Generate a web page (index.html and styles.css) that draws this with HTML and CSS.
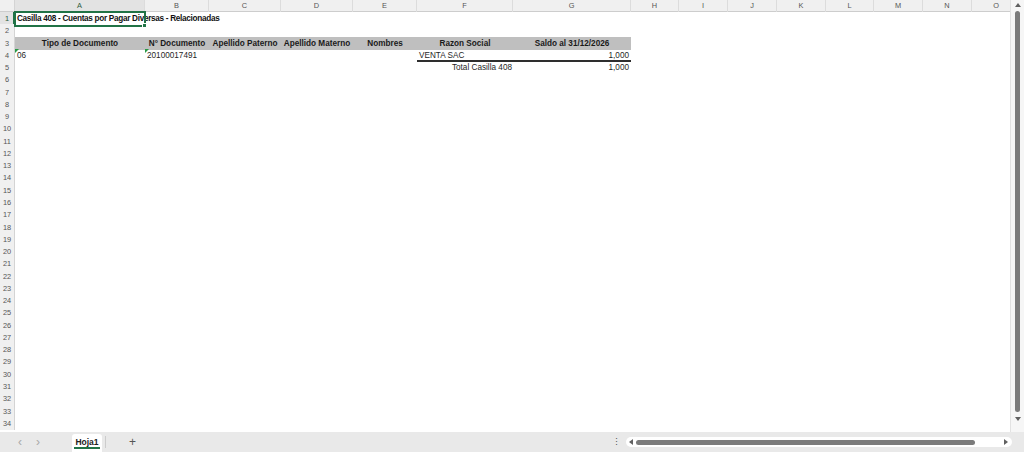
FILE: index.html
```html
<!DOCTYPE html>
<html lang="es">
<head>
<meta charset="utf-8">
<title>Hoja1</title>
<link rel="stylesheet" href="styles.css">
</head>
<body>
<div class="app">
  <div class="main">
    <div class="sheet">
      <div class="row colhdr">
        <div class="corner"></div>
        <div class="ch sel">A</div><div class="ch">B</div><div class="ch">C</div><div class="ch">D</div>
        <div class="ch">E</div><div class="ch">F</div><div class="ch">G</div><div class="ch">H</div>
        <div class="ch">I</div><div class="ch">J</div><div class="ch">K</div><div class="ch">L</div>
        <div class="ch">M</div><div class="ch">N</div><div class="ch">O</div>
      </div>
      <div class="row"><div class="rh sel">1</div><div class="c active"><span class="title">Casilla 408 - Cuentas por Pagar Diversas - Relacionadas</span></div></div>
      <div class="row"><div class="rh">2</div></div>
      <div class="row">
        <div class="rh">3</div>
        <div class="c hd">Tipo de Documento</div>
        <div class="c hd">N° Documento</div>
        <div class="c hd">Apellido Paterno</div>
        <div class="c hd">Apellido Materno</div>
        <div class="c hd">Nombres</div>
        <div class="c hd">Razon Social</div>
        <div class="c hd">Saldo al 31/12/2026</div>
      </div>
      <div class="row">
        <div class="rh">4</div>
        <div class="c txt flag">06</div>
        <div class="c txt flag">20100017491</div>
        <div class="c"></div><div class="c"></div><div class="c"></div>
        <div class="c txt thick">VENTA SAC</div>
        <div class="c num thick">1,000</div>
      </div>
      <div class="row">
        <div class="rh">5</div>
        <div class="c"></div><div class="c"></div><div class="c"></div><div class="c"></div><div class="c"></div>
        <div class="c num total">Total Casilla 408</div>
        <div class="c num">1,000</div>
      </div>
      <div class="row"><div class="rh">6</div></div>
      <div class="row"><div class="rh">7</div></div>
      <div class="row"><div class="rh">8</div></div>
      <div class="row"><div class="rh">9</div></div>
      <div class="row"><div class="rh">10</div></div>
      <div class="row"><div class="rh">11</div></div>
      <div class="row"><div class="rh">12</div></div>
      <div class="row"><div class="rh">13</div></div>
      <div class="row"><div class="rh">14</div></div>
      <div class="row"><div class="rh">15</div></div>
      <div class="row"><div class="rh">16</div></div>
      <div class="row"><div class="rh">17</div></div>
      <div class="row"><div class="rh">18</div></div>
      <div class="row"><div class="rh">19</div></div>
      <div class="row"><div class="rh">20</div></div>
      <div class="row"><div class="rh">21</div></div>
      <div class="row"><div class="rh">22</div></div>
      <div class="row"><div class="rh">23</div></div>
      <div class="row"><div class="rh">24</div></div>
      <div class="row"><div class="rh">25</div></div>
      <div class="row"><div class="rh">26</div></div>
      <div class="row"><div class="rh">27</div></div>
      <div class="row"><div class="rh">28</div></div>
      <div class="row"><div class="rh">29</div></div>
      <div class="row"><div class="rh">30</div></div>
      <div class="row"><div class="rh">31</div></div>
      <div class="row"><div class="rh">32</div></div>
      <div class="row"><div class="rh">33</div></div>
      <div class="row"><div class="rh">34</div></div>
    </div>
    <div class="vscroll">
      <span class="tri up"></span>
      <span class="vthumb"></span>
      <span class="tri down"></span>
    </div>
  </div>
  <div class="tabbar">
    <span class="nav">‹</span>
    <span class="nav">›</span>
    <div class="tab"><span class="tabname">Hoja1</span></div>
    <span class="tabsep"></span>
    <span class="add">+</span>
    <span class="more">⋮</span>
    <div class="htrack">
      <span class="tri left"></span>
      <span class="hthumb"></span>
      <span class="tri right"></span>
    </div>
  </div>
</div>
</body>
</html>
```
FILE: styles.css
```css
:root {
  --cols: 15px 130px 64px 72px 72px 64px 96px 118px 48px 49px 49px 49px 48px 49px 49px 49px;
  --green: #217346;
}

html, body {
  margin: 0;
  padding: 0;
  background: #ffffff;
}

body {
  width: 1024px;
  height: 452px;
  overflow: hidden;
  font-family: "Liberation Sans Narrow", "Liberation Sans", Arial, sans-serif;
  color: #1f1f1f;
}

.app {
  display: flex;
  flex-direction: column;
  width: 1024px;
  height: 452px;
}

.main {
  display: flex;
  height: 432px;
}

/* grid of cells */
.sheet {
  width: 1010px;
  overflow: hidden;
  background: #ffffff;
}

.row {
  display: grid;
  grid-template-columns: var(--cols);
  height: 12.27px;
  font-size: 8.2px;
  line-height: 13.5px;
}

.colhdr {
  height: 12px;
  box-sizing: border-box;
  background: #f0f0f0;
  border-bottom: 1px solid #cdcdcd;
  font-family: "Liberation Sans", Arial, sans-serif;
  font-size: 7.4px;
  line-height: 12px;
  color: #555555;
}

.corner {
  border-right: 1px solid #d4d4d4;
}

.ch {
  text-align: center;
  border-right: 1px solid #dcdcdc;
}

.ch.sel {
  background: #e3e3e3;
  box-shadow: inset 0 -1px 0 var(--green);
  color: #2f5d3f;
}

.rh {
  background: #f0f0f0;
  border-right: 1px solid #d4d4d4;
  text-align: center;
  font-family: "Liberation Sans", Arial, sans-serif;
  font-size: 7.4px;
  color: #555555;
}

.rh.sel {
  background: #e3e3e3;
  box-shadow: inset -1px 0 0 var(--green);
  color: #2f5d3f;
}

.c {
  position: relative;
  white-space: nowrap;
  min-width: 0;
}

/* selected cell A1 with fill handle */
.active {
  outline: 2px solid var(--green);
  outline-offset: -1px;
  overflow: visible;
  z-index: 1;
}

.active::after {
  content: "";
  position: absolute;
  right: -2px;
  bottom: -2px;
  width: 3px;
  height: 3px;
  background: var(--green);
  border: 1px solid #ffffff;
}

.title {
  font-weight: bold;
  padding-left: 2px;
  letter-spacing: -0.3px;
  color: #111111;
}

.hd {
  background: #bfbfbf;
  font-weight: bold;
  text-align: center;
  overflow: hidden;
  color: #1a1a1a;
}

.txt {
  padding-left: 2px;
}

.num {
  text-align: right;
  padding-right: 2px;
}

.total {
  padding-right: 1px;
}

.thick {
  box-shadow: inset 0 -2px 0 #2e2e2e;
}

/* number-stored-as-text marker */
.flag::before {
  content: "";
  position: absolute;
  left: 0;
  top: 0;
  border-top: 4px solid #2a9a45;
  border-right: 4px solid transparent;
}

/* vertical scrollbar */
.vscroll {
  width: 14px;
  background: #f6f6f6;
  border-left: 1px solid #e2e2e2;
  box-sizing: border-box;
  display: flex;
  flex-direction: column;
  align-items: center;
  padding: 3px 0 11px;
}

.vthumb {
  width: 5px;
  flex: 1;
  margin: 4px 0 5px;
  border-radius: 3px;
  background: #7b7b7b;
}

.tri {
  width: 0;
  height: 0;
  flex: none;
}

.tri.up {
  border-left: 3px solid transparent;
  border-right: 3px solid transparent;
  border-bottom: 4px solid #606060;
}

.tri.down {
  border-left: 3px solid transparent;
  border-right: 3px solid transparent;
  border-top: 4px solid #606060;
}

.tri.left {
  border-top: 3px solid transparent;
  border-bottom: 3px solid transparent;
  border-right: 4px solid #606060;
}

.tri.right {
  border-top: 3px solid transparent;
  border-bottom: 3px solid transparent;
  border-left: 4px solid #606060;
  margin-left: auto;
}

/* sheet tabs and horizontal scrollbar */
.tabbar {
  height: 20px;
  background: #e9e9e9;
  display: flex;
  align-items: center;
  padding-left: 11px;
  font-family: "Liberation Sans", Arial, sans-serif;
}

.nav {
  width: 18px;
  text-align: center;
  font-size: 12px;
  line-height: 16px;
  color: #a8a8a8;
}

.tab {
  align-self: flex-end;
  margin-left: 25px;
  width: 30px;
  height: 18px;
  background: #ffffff;
  border-radius: 3px 3px 0 0;
  display: flex;
  justify-content: center;
  align-items: center;
}

.tabname {
  font-size: 8.5px;
  font-weight: bold;
  color: #222222;
  line-height: 10px;
  border-bottom: 2px solid var(--green);
  padding: 0 1px;
}

.tabsep {
  width: 1px;
  height: 12px;
  margin-left: 3px;
  background: #cccccc;
}

.add {
  margin-left: 23px;
  font-size: 12px;
  line-height: 14px;
  color: #555555;
}

.more {
  margin-left: auto;
  width: 10px;
  margin-right: 3px;
  text-align: center;
  font-size: 9px;
  color: #555555;
}

.htrack {
  width: 386px;
  height: 10px;
  margin-left: 2px;
  margin-right: 12px;
  background: #ffffff;
  border-radius: 5px;
  display: flex;
  align-items: center;
  padding: 0 4px 0 3px;
  box-sizing: border-box;
}

.hthumb {
  width: 339px;
  height: 5px;
  margin-left: 3px;
  border-radius: 3px;
  background: #7b7b7b;
}
```
